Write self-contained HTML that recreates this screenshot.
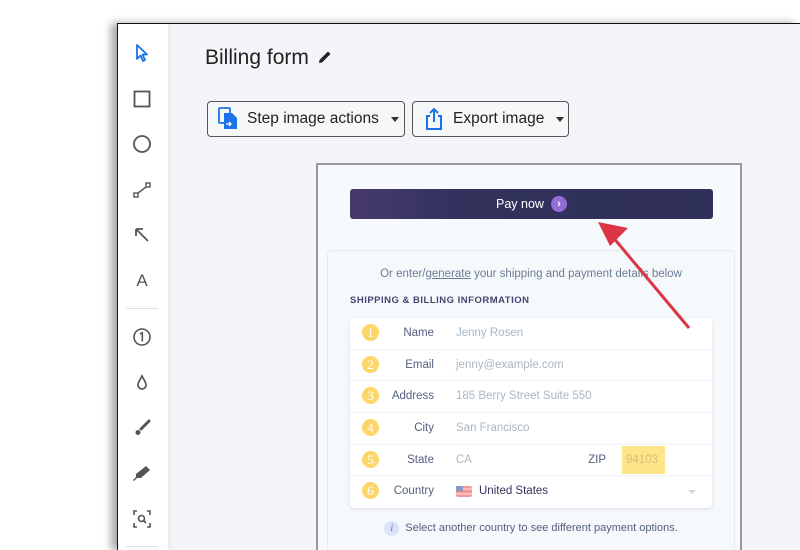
<!DOCTYPE html>
<html><head><meta charset="utf-8"><style>
*{box-sizing:border-box;margin:0;padding:0}
html,body{width:800px;height:550px;overflow:hidden}
body{background:#fff;position:relative;font-family:"Liberation Sans",sans-serif}
.frame{position:absolute;left:117px;top:23px;width:683px;height:527px;border:1px solid #111;border-bottom:none;border-right:none;background:#f4f5f8;box-shadow:-6px 0 8px rgba(0,0,0,.35);overflow:hidden}
.side{position:absolute;left:0;top:0;width:50px;height:100%;background:#fff;box-shadow:2px 0 4px rgba(0,0,0,.05)}
.ic{position:absolute;left:13px;width:22px;height:22px}
.sep{position:absolute;left:8px;width:32px;height:1px;background:#dde1e6}
h1{position:absolute;left:87px;top:22px;font-size:21px;font-weight:normal;color:#222}
.btn{position:absolute;top:77px;height:36px;border:1px solid #555;border-radius:4px;background:#f6f7f9;font-size:15.5px;color:#222;display:flex;align-items:center}
.caret{width:0;height:0;border-left:4.5px solid transparent;border-right:4.5px solid transparent;border-top:5px solid #333;margin-left:12px}
.card{position:absolute;left:198px;top:139px;width:426px;height:387px;border:2px solid #999;border-bottom:none;background:#f7fafc;overflow:hidden}
.pay{position:absolute;left:32px;top:24px;width:363px;height:30px;border-radius:3px;background:linear-gradient(90deg,#473a6e,#32325d 30%,#2f3059);color:#fff;font-size:12.5px;display:flex;align-items:center;justify-content:center}
.panel{position:absolute;left:9px;top:85px;width:408px;height:300px;border:1px solid #e6ebf1;border-bottom:none;border-radius:4px 4px 0 0;background:#f6f9fc}
.or{position:absolute;top:17px;width:100%;text-align:center;font-size:11.5px;color:#6b7c93}
.sh{position:absolute;left:22px;top:44px;font-size:9.5px;font-weight:bold;letter-spacing:.5px;color:#424770}
.rows{position:absolute;left:22px;top:67px;width:362px;height:190px;background:#fff;border-radius:4px;box-shadow:0 1px 3px rgba(50,50,93,.15)}
.row{height:31.7px;border-bottom:1px solid #f0f4f8;position:relative;font-size:11.5px}
.row:last-child{border:none}
.n{position:absolute;left:12px;top:6px;width:17px;height:17px;border-radius:50%;background:#fcd669;color:#fff;font-size:13px;text-align:center;line-height:17px;font-family:"Liberation Serif",serif}
.l{position:absolute;right:278px;top:9px;color:#525f7f}
.v{position:absolute;left:106px;top:9px;color:#aab7c4}
.note{position:absolute;top:270px;left:0;width:100%;text-align:center;font-size:11px;color:#525f7f}
</style></head><body>
<div class="frame">
 <div class="side">
  <svg class="ic" style="top:18px" viewBox="0 0 22 22"><path d="M6 3 L6 17 L9.5 13.5 L12 19 L14 18 L11.5 12.5 L16 12.5 Z" fill="none" stroke="#1a73e8" stroke-width="1.8" stroke-linejoin="round"/></svg>
  <svg class="ic" style="top:64px" viewBox="0 0 22 22"><rect x="3.5" y="3.5" width="15" height="15" fill="none" stroke="#555" stroke-width="1.8"/></svg>
  <svg class="ic" style="top:109px" viewBox="0 0 22 22"><circle cx="11" cy="11" r="8" fill="none" stroke="#555" stroke-width="1.8"/></svg>
  <svg class="ic" style="top:155px" viewBox="0 0 22 22"><rect x="3" y="14" width="4" height="4" fill="none" stroke="#555" stroke-width="1.4"/><rect x="15" y="4" width="4" height="4" fill="none" stroke="#555" stroke-width="1.4"/><path d="M7 14 L15 8" stroke="#555" stroke-width="1.5"/></svg>
  <svg class="ic" style="top:200px" viewBox="0 0 22 22"><path d="M5 5 L17 17 M5 5 L5 12 M5 5 L12 5" stroke="#555" stroke-width="1.8" fill="none"/></svg>
  <div class="ic" style="top:246px;text-align:center;font-size:17px;color:#555;line-height:22px">A</div>
  <div class="sep" style="top:284px"></div>
  <svg class="ic" style="top:302px" viewBox="0 0 22 22"><circle cx="11" cy="11" r="8" fill="none" stroke="#555" stroke-width="1.6"/><path d="M9 8 L11.3 6.8 L11.3 15.5" stroke="#555" stroke-width="1.6" fill="none"/></svg>
  <svg class="ic" style="top:348px" viewBox="0 0 22 22"><path d="M11 4 C9 8 7 10 7 13 A4 4 0 0 0 15 13 C15 10 13 8 11 4Z" fill="none" stroke="#555" stroke-width="1.7"/></svg>
  <svg class="ic" style="top:393px" viewBox="0 0 22 22"><path d="M18 4 L10 12" stroke="#555" stroke-width="3" stroke-linecap="round"/><circle cx="7" cy="15.5" r="2.5" fill="#555"/></svg>
  <svg class="ic" style="top:438px" viewBox="0 0 22 22"><path d="M15 4 L19 8 L10 16 L6 16 L3 19 L2 18 L5 15 L5 12 Z" fill="#555"/></svg>
  <svg class="ic" style="top:484px" viewBox="0 0 22 22"><path d="M3 7 V3 H6 M16 3 H19 V7 M19 15 V19 H16 M6 19 H3 V15" stroke="#555" stroke-width="1.6" fill="none"/><circle cx="10.5" cy="10.5" r="3" fill="none" stroke="#555" stroke-width="1.6"/><path d="M12.5 12.5 L15 15" stroke="#555" stroke-width="1.8"/></svg>
  <div class="sep" style="top:522px"></div>
 </div>
 <h1>Billing form <svg width="16" height="16" viewBox="0 0 16 16" style="vertical-align:-1px;margin-left:2px"><path d="M2 14 L2.5 11 L11 2.5 L13.5 5 L5 13.5 Z" fill="#222"/></svg></h1>
 <div class="btn" style="left:89px;width:198px;padding-left:10px">
  <svg width="22" height="24" viewBox="0 0 22 24"><rect x="1" y="1" width="11" height="15" rx="1" fill="none" stroke="#1a73e8" stroke-width="1.8"/><path d="M6 6 H14 L19 11 V22 H6 Z" fill="#1a73e8"/><path d="M8 17 H13 M11 15 L13 17 L11 19" stroke="#fff" stroke-width="1.3" fill="none"/></svg>
  <span style="margin-left:7px">Step image actions</span><span class="caret"></span></div>
 <div class="btn" style="left:294px;width:157px;padding-left:12px">
  <svg width="18" height="24" viewBox="0 0 18 24"><path d="M5 9 H2 V22 H16 V9 H13" fill="none" stroke="#1a73e8" stroke-width="2"/><path d="M9 15 V2 M5 6 L9 2 L13 6" fill="none" stroke="#1a73e8" stroke-width="2"/></svg>
  <span style="margin-left:10px">Export image</span><span class="caret"></span></div>
 <div class="card">
  <div class="pay">Pay now <span style="display:inline-block;width:16px;height:16px;border-radius:50%;background:#8f6ed5;margin-left:7px;color:#fff;font-size:11px;line-height:16px;text-align:center;font-weight:bold">›</span></div>
  <div class="panel">
   <div class="or">Or enter/<u>generate</u> your shipping and payment details below</div>
   <div class="sh">SHIPPING &amp; BILLING INFORMATION</div>
   <div class="rows">
    <div class="row"><span class="n">1</span><span class="l">Name</span><span class="v">Jenny Rosen</span></div>
    <div class="row"><span class="n">2</span><span class="l">Email</span><span class="v">jenny@example.com</span></div>
    <div class="row"><span class="n">3</span><span class="l">Address</span><span class="v">185 Berry Street Suite 550</span></div>
    <div class="row"><span class="n">4</span><span class="l">City</span><span class="v">San Francisco</span></div>
    <div class="row"><span class="n">5</span><span class="l">State</span><span class="v">CA</span><span class="l" style="right:106px;left:auto">ZIP</span><span style="position:absolute;left:272px;top:1px;width:43px;height:28px;background:#fee58a;color:#d6c071;padding:8px 4px;font-size:11.5px">94103</span></div>
    <div class="row"><span class="n">6</span><span class="l">Country</span><span style="position:absolute;left:106px;top:10px;width:16px;height:11px;background:linear-gradient(#e99 0 20%,#fbb 20% 40%,#e88 40% 60%,#fbb 60% 80%,#e99 80%);border-radius:2px"><span style="position:absolute;left:0;top:0;width:7px;height:5px;background:#8a96c9"></span></span><span style="position:absolute;left:129px;top:9px;color:#32325d">United States</span><span style="position:absolute;right:16px;top:14px;border-left:4px solid transparent;border-right:4px solid transparent;border-top:4px solid #cfd7df"></span></div>
   </div>
   <div class="note"><span style="display:inline-block;width:15px;height:15px;border-radius:50%;background:#dde3f6;color:#6772e5;font-style:italic;font-family:'Liberation Serif',serif;font-size:11px;line-height:15px;margin-right:6px">i</span>Select another country to see different payment options.</div>
  </div>
 </div>
</div>
<svg style="position:absolute;left:0;top:0" width="800" height="550"><path d="M689 328 L612 236" stroke="#dc3545" stroke-width="3"/><path d="M598 222 L628 228 L610 246 Z" fill="#dc3545"/></svg>
</body></html>
